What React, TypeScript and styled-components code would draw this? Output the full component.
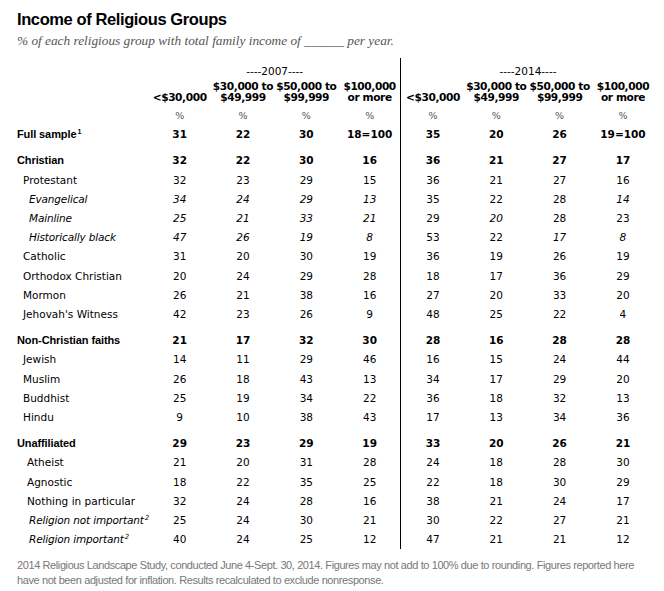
import React from "react";
import styled, { createGlobalStyle, css } from "styled-components";

const GlobalStyle = createGlobalStyle`
  html, body { margin: 0; padding: 0; background: #ffffff; }
  body { width: 664px; height: 591px; overflow: hidden; }
`;

const Page = styled.div`
  width: 664px;
  height: 591px;
  box-sizing: border-box;
  padding: 9px 0 0 17px;
  background: #ffffff;
  color: #000;
  font-family: "DejaVu Sans", "Liberation Sans", sans-serif;
`;

const Title = styled.h1`
  margin: 0;
  font-family: "Liberation Sans", Arial, sans-serif;
  font-weight: 700;
  font-size: 16.5px;
  line-height: 20px;
  letter-spacing: -0.4px;
  color: #000;
`;

const Subtitle = styled.p`
  margin: 4px 0 0;
  font-family: "Liberation Serif", "Times New Roman", serif;
  font-style: italic;
  font-size: 13.3px;
  line-height: 16px;
  color: #555;
`;

const Table = styled.div`
  margin-top: 9px;
  display: flex;
  flex-direction: column;
`;

const COLS = "131px repeat(8, 63.33px)";

const Row = styled.div`
  display: grid;
  grid-template-columns: ${COLS};
`;

const Cell = styled.div<{ $divider?: boolean; $gap?: boolean }>`
  line-height: 19.2px;
  text-align: center;
  white-space: nowrap;
  padding-top: ${(p) => (p.$gap ? "7px" : "0")};
  ${(p) =>
    p.$divider &&
    css`
      border-left: 1px solid #000;
      margin-left: -1px;
    `}
`;

const YearCell = styled(Cell)`
  grid-column: span 4;
  font-size: 10.5px;
  line-height: 14px;
  padding-top: 6px;
  padding-bottom: 2.5px;
`;

const HeadCell = styled(Cell)`
  display: flex;
  flex-direction: column;
  justify-content: flex-end;
  align-items: center;
  font-weight: 700;
  font-size: 10.6px;
  line-height: 11px;
  letter-spacing: -0.4px;
`;

const PctCell = styled(Cell)`
  font-size: 9.5px;
  color: #555;
  padding-top: 3.5px;
`;

const Label = styled(Cell)<{ $level: number; $bold?: boolean; $italic?: boolean }>`
  text-align: left;
  padding-left: ${(p) => p.$level}px;
  font-size: 10.5px;
  font-style: ${(p) => (p.$italic ? "italic" : "normal")};
  letter-spacing: ${(p) => (p.$italic ? "-0.15px" : "0")};
  ${(p) =>
    p.$bold &&
    css`
      font-family: "Liberation Sans", Arial, sans-serif;
      font-weight: 700;
      font-size: 11px;
      letter-spacing: -0.1px;
    `}
`;

const Value = styled(Cell)<{ $bold?: boolean; $italic?: boolean }>`
  font-size: 10.5px;
  font-weight: ${(p) => (p.$bold ? 700 : 400)};
  font-style: ${(p) => (p.$italic ? "italic" : "normal")};
`;

const Sup = styled.sup`
  font-size: 7px;
  line-height: 0;
  vertical-align: 4px;
  margin-left: 1px;
`;

const Footer = styled.div`
  margin-top: 9px;
  font-family: "Liberation Sans", Arial, sans-serif;
  font-size: 11px;
  line-height: 15px;
  letter-spacing: -0.4px;
  color: #777;
`;

const FooterLine = styled.div`
  white-space: nowrap;
`;

type DataRow = {
  label: string;
  sup?: string;
  level: number;
  bold?: boolean;
  italicLabel?: boolean;
  gap?: boolean;
  values: string[];
  italic?: boolean[];
};

const I4 = [true, true, true, true];

const rows: DataRow[] = [
  { label: "Full sample", sup: "1", level: 0, bold: true, values: ["31", "22", "30", "18=100", "35", "20", "26", "19=100"] },
  { label: "Christian", level: 0, bold: true, gap: true, values: ["32", "22", "30", "16", "36", "21", "27", "17"] },
  { label: "Protestant", level: 6, values: ["32", "23", "29", "15", "36", "21", "27", "16"] },
  { label: "Evangelical", level: 12, italicLabel: true, values: ["34", "24", "29", "13", "35", "22", "28", "14"], italic: [...I4, false, false, false, true] },
  { label: "Mainline", level: 12, italicLabel: true, values: ["25", "21", "33", "21", "29", "20", "28", "23"], italic: [...I4, false, true, false, false] },
  { label: "Historically black", level: 12, italicLabel: true, values: ["47", "26", "19", "8", "53", "22", "17", "8"], italic: [...I4, false, false, true, true] },
  { label: "Catholic", level: 6, values: ["31", "20", "30", "19", "36", "19", "26", "19"] },
  { label: "Orthodox Christian", level: 6, values: ["20", "24", "29", "28", "18", "17", "36", "29"] },
  { label: "Mormon", level: 6, values: ["26", "21", "38", "16", "27", "20", "33", "20"] },
  { label: "Jehovah's Witness", level: 6, values: ["42", "23", "26", "9", "48", "25", "22", "4"] },
  { label: "Non-Christian faiths", level: 0, bold: true, gap: true, values: ["21", "17", "32", "30", "28", "16", "28", "28"] },
  { label: "Jewish", level: 6, values: ["14", "11", "29", "46", "16", "15", "24", "44"] },
  { label: "Muslim", level: 6, values: ["26", "18", "43", "13", "34", "17", "29", "20"] },
  { label: "Buddhist", level: 6, values: ["25", "19", "34", "22", "36", "18", "32", "13"] },
  { label: "Hindu", level: 6, values: ["9", "10", "38", "43", "17", "13", "34", "36"] },
  { label: "Unaffiliated", level: 0, bold: true, gap: true, values: ["29", "23", "29", "19", "33", "20", "26", "21"] },
  { label: "Atheist", level: 10, values: ["21", "20", "31", "28", "24", "18", "28", "30"] },
  { label: "Agnostic", level: 10, values: ["18", "22", "35", "25", "22", "18", "30", "29"] },
  { label: "Nothing in particular", level: 10, values: ["32", "24", "28", "16", "38", "21", "24", "17"] },
  { label: "Religion not important", sup: "2", level: 12, italicLabel: true, values: ["25", "24", "30", "21", "30", "22", "27", "21"] },
  { label: "Religion important", sup: "2", level: 12, italicLabel: true, values: ["40", "24", "25", "12", "47", "21", "21", "12"] },
];

const headers: [string, string][] = [
  ["", "<$30,000"],
  ["$30,000 to", "$49,999"],
  ["$50,000 to", "$99,999"],
  ["$100,000", "or more"],
];

export default function App() {
  const allHeaders = [...headers, ...headers];
  return (
    <Page>
      <GlobalStyle />
      <Title>Income of Religious Groups</Title>
      <Subtitle>% of each religious group with total family income of ______ per year.</Subtitle>
      <Table>
        <Row>
          <Cell />
          <YearCell>----2007----</YearCell>
          <YearCell $divider>----2014----</YearCell>
        </Row>
        <Row>
          <Cell />
          {allHeaders.map(([a, b], i) => (
            <HeadCell key={i} $divider={i === 4}>
              {a && <span>{a}</span>}
              <span>{b}</span>
            </HeadCell>
          ))}
        </Row>
        <Row>
          <Cell />
          {allHeaders.map((_, i) => (
            <PctCell key={i} $divider={i === 4}>
              %
            </PctCell>
          ))}
        </Row>
        {rows.map((r) => (
          <Row key={r.label}>
            <Label $level={r.level} $bold={r.bold} $italic={r.italicLabel} $gap={r.gap}>
              {r.label}
              {r.sup && <Sup>{r.sup}</Sup>}
            </Label>
            {r.values.map((v, i) => (
              <Value
                key={i}
                $bold={r.bold}
                $italic={r.italic ? r.italic[i] : false}
                $gap={r.gap}
                $divider={i === 4}
              >
                {v}
              </Value>
            ))}
          </Row>
        ))}
      </Table>
      <Footer>
        <FooterLine>
          2014 Religious Landscape Study, conducted June 4-Sept. 30, 2014. Figures may not add to 100% due to rounding. Figures reported here
        </FooterLine>
        <FooterLine>have not been adjusted for inflation. Results recalculated to exclude nonresponse.</FooterLine>
      </Footer>
    </Page>
  );
}
